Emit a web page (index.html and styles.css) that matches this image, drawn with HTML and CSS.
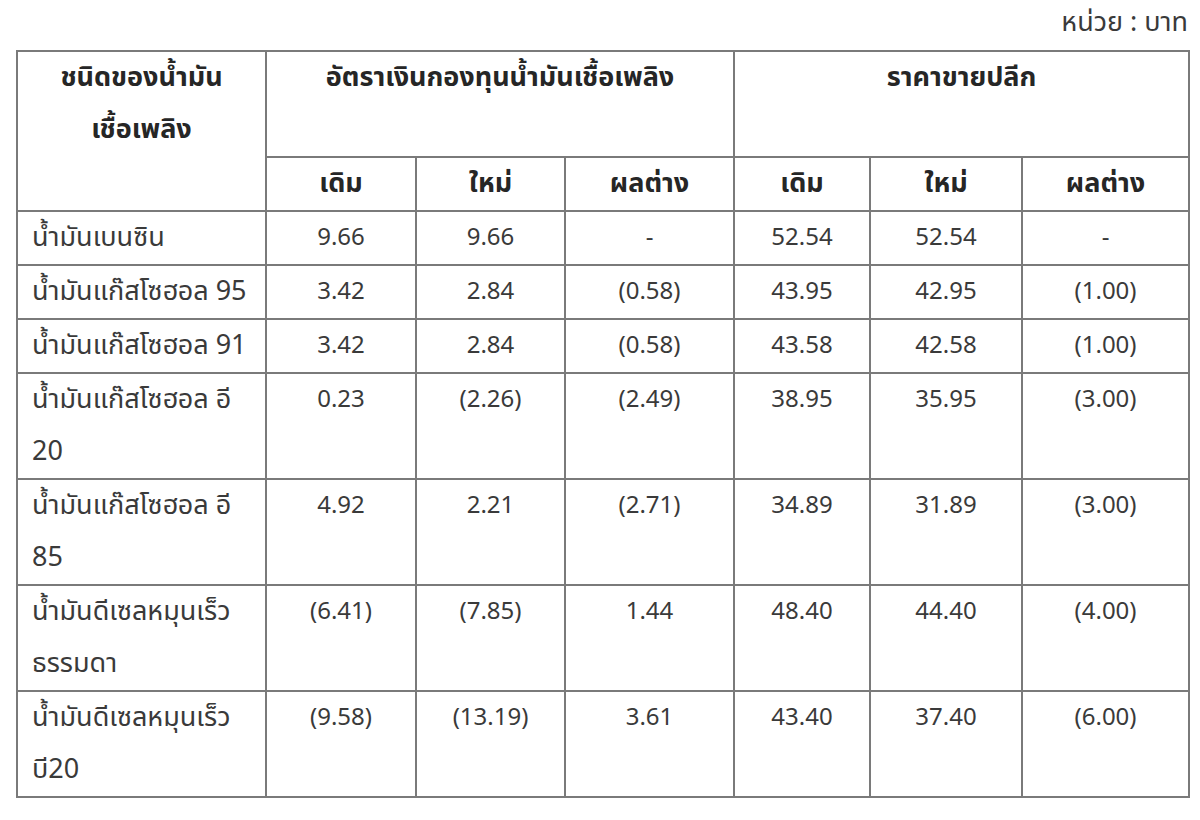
FILE: index.html
```html
<!DOCTYPE html>
<html lang="th">
<head>
<meta charset="utf-8">
<title>อัตราเงินกองทุนน้ำมันเชื้อเพลิง</title>
<link rel="stylesheet" href="styles.css">
</head>
<body>
<div class="page">
  <div class="unit">หน่วย : บาท</div>
  <table class="fuel">
    <colgroup>
      <col class="c-name">
      <col class="c1"><col class="c2"><col class="c3">
      <col class="c4"><col class="c5"><col class="c6">
    </colgroup>
    <thead>
      <tr class="head-top">
        <th rowspan="2" class="head-name">ชนิดของน้ำมัน<br>เชื้อเพลิง</th>
        <th colspan="3" class="head-group">อัตราเงินกองทุนน้ำมันเชื้อเพลิง</th>
        <th colspan="3" class="head-group">ราคาขายปลีก</th>
      </tr>
      <tr>
        <th>เดิม</th><th>ใหม่</th><th>ผลต่าง</th>
        <th>เดิม</th><th>ใหม่</th><th>ผลต่าง</th>
      </tr>
    </thead>
    <tbody>
      <tr><td class="name">น้ำมันเบนซิน</td><td>9.66</td><td>9.66</td><td>-</td><td>52.54</td><td>52.54</td><td>-</td></tr>
      <tr><td class="name">น้ำมันแก๊สโซฮอล 95</td><td>3.42</td><td>2.84</td><td>(0.58)</td><td>43.95</td><td>42.95</td><td>(1.00)</td></tr>
      <tr><td class="name">น้ำมันแก๊สโซฮอล 91</td><td>3.42</td><td>2.84</td><td>(0.58)</td><td>43.58</td><td>42.58</td><td>(1.00)</td></tr>
      <tr><td class="name">น้ำมันแก๊สโซฮอล อี<br>20</td><td>0.23</td><td>(2.26)</td><td>(2.49)</td><td>38.95</td><td>35.95</td><td>(3.00)</td></tr>
      <tr><td class="name">น้ำมันแก๊สโซฮอล อี<br>85</td><td>4.92</td><td>2.21</td><td>(2.71)</td><td>34.89</td><td>31.89</td><td>(3.00)</td></tr>
      <tr><td class="name">น้ำมันดีเซลหมุนเร็ว<br>ธรรมดา</td><td>(6.41)</td><td>(7.85)</td><td>1.44</td><td>48.40</td><td>44.40</td><td>(4.00)</td></tr>
      <tr><td class="name">น้ำมันดีเซลหมุนเร็ว<br>บี20</td><td>(9.58)</td><td>(13.19)</td><td>3.61</td><td>43.40</td><td>37.40</td><td>(6.00)</td></tr>
    </tbody>
  </table>
</div>
</body>
</html>
```
FILE: styles.css
```css
html, body {
  margin: 0;
  padding: 0;
  background: #ffffff;
}

body {
  font-family: "Noto Sans Thai", "Noto Sans Thai UI", "Leelawadee UI", Tahoma, Loma, Garuda, "Noto Sans", sans-serif;
  font-size: 24px;
  color: #3a3a3a;
}

.page {
  width: 1172px;
  margin-left: 16px;
}

.unit {
  height: 50px;
  line-height: 46px;
  font-size: 27px;
  text-align: right;
  color: #3a3a3a;
}

.fuel {
  width: 1172px;
  table-layout: fixed;
  border-collapse: collapse;
}

.c-name { width: 249px; }
.c1 { width: 150px; }
.c2 { width: 149px; }
.c3 { width: 169px; }
.c4 { width: 136px; }
.c5 { width: 152px; }
.c6 { width: 167px; }

.fuel th,
.fuel td {
  border: 2px solid #7a7a7a;
  padding: 0;
  line-height: 52px;
  vertical-align: top;
  text-align: center;
  white-space: nowrap;
}

.fuel th {
  font-size: 27px;
  font-weight: 700;
  color: #262626;
}

.fuel th.head-group {
  height: 104px;
}

.fuel td.name {
  font-size: 27px;
  text-align: left;
  padding-left: 14px;
}
```
